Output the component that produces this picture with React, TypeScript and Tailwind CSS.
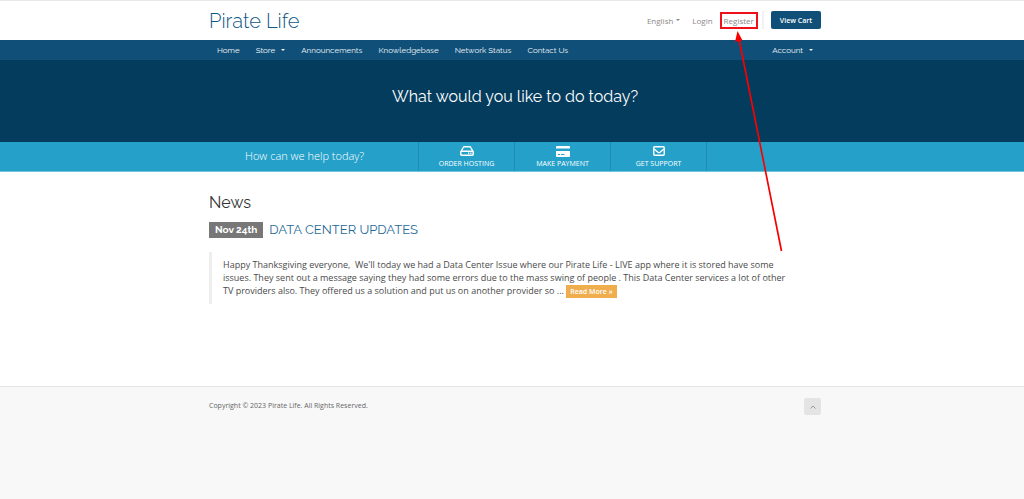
import React from 'react';

const heading = "font-['Raleway','Lato',sans-serif]";

const navLinks = ['Announcements', 'Knowledgebase', 'Network Status', 'Contact Us'];

const Container = ({ children }: { children: React.ReactNode }) => (
  <div className="pl-[6px]">
    <div className="max-w-[612px] mx-auto">{children}</div>
  </div>
);

const Caret = () => (
  <svg viewBox="0 0 4 2" className="w-1 h-[2px]" fill="currentColor" aria-hidden="true">
    <path d="M0 0h4L2 2z" />
  </svg>
);

const HostingIcon = () => (
  <svg viewBox="0 0 28 20" className="w-[14px] h-[10px]" fill="none" stroke="currentColor" strokeWidth="3" strokeLinejoin="round">
    <path d="M2 11L6.5 3Q7.200 1.600 8.800 1.600H19.200Q20.800 1.600 21.500 3L26 11" />
    <rect x="1.500" y="10.500" width="25" height="8" rx="2" />
    <path d="M16 14.500h2.400M20.500 14.500h2.400" />
  </svg>
);

const PaymentIcon = () => (
  <svg viewBox="0 0 28 22" className="w-[14px] h-[11px]" fill="currentColor">
    <path d="M2 0h24q2 0 2 2v3H0V2q0-2 2-2z" />
    <path fillRule="evenodd" d="M0 10h28v10q0 2-2 2H2q-2 0-2-2zM4 16v2h4v-2zM10 16v2h7v-2z" />
  </svg>
);

const SupportIcon = () => (
  <svg viewBox="0 0 24 20" className="w-3 h-[10px]" fill="none" stroke="currentColor" strokeWidth="2.800" strokeLinejoin="round">
    <rect x="1.500" y="1.500" width="21" height="17" rx="2" />
    <path d="M2 6l8 6.500q2 1.500 4 0L22 6" />
  </svg>
);

const shortcuts = [
  { label: 'ORDER HOSTING', icon: <HostingIcon /> },
  { label: 'MAKE PAYMENT', icon: <PaymentIcon /> },
  { label: 'GET SUPPORT', icon: <SupportIcon /> },
];

const App = () => {
  return (
    <div className="min-h-screen flex flex-col bg-[#f8f8f8] font-['Open_Sans',sans-serif] text-[#4a4a4a]">
      {/* Header */}
      <header className="bg-white border-t border-[#e8e8e8]">
        <Container>
          <div className="h-[39px] flex items-center justify-between">
            <a href="#" className={`${heading} text-xl font-light text-[#0f5686]`}>
              Pirate Life
            </a>
            <div className="flex items-center h-9 pb-px text-[8px] leading-[11px] text-[#888888]">
              <button type="button" className="flex items-center gap-[3px] mr-3">
                English <Caret />
              </button>
              <a href="#" className="mr-[7px]">Login</a>
              <a href="#" className="relative border-2 border-[#f0101a] px-[2px] py-px">
                Register
                {/* Pointer to the register link */}
                <svg className="absolute top-[17px] left-[12px] z-10 w-[50px] h-[222px] pointer-events-none" viewBox="0 0 50 222" aria-hidden="true">
                  <path d="M5 8L47.500 220" stroke="#f80000" strokeWidth="1.700" />
                  <path d="M3.500 0L8.500 9.500L1 11z" fill="#f80000" />
                </svg>
              </a>
              <span className="h-[18px] border-l-2 border-[#f2f2f2] ml-1 mr-[7px]" />
              <button type="button" className="bg-[#0f4f78] text-white text-[7px] font-semibold rounded-xs h-[18px] px-[9px]">
                View Cart
              </button>
            </div>
          </div>
        </Container>
      </header>

      {/* Navigation */}
      <nav className={`${heading} bg-[#0f4f78] text-[#f0f5f8] text-[8px] leading-3`}>
        <Container>
          <div className="px-2 h-5 flex items-center gap-4">
            <a href="#">Home</a>
            <button type="button" className="flex items-center gap-[6px]">
              Store <Caret />
            </button>
            {navLinks.map((link) => (
              <a key={link} href="#">{link}</a>
            ))}
            <button type="button" className="flex items-center gap-[6px] ml-auto">
              Account <Caret />
            </button>
          </div>
        </Container>
      </nav>

      {/* Banner */}
      <section className="bg-[#043c5e] pt-[25px] pb-[33px] text-center">
        <Container>
          <h1 className={`${heading} text-base text-white`}>What would you like to do today?</h1>
        </Container>
      </section>

      {/* Shortcuts */}
      <section className="bg-[#25a1c9] border-b border-[#70c3de] text-white">
        <Container>
          <div className="flex h-[29px]">
            <p className="w-[209px] pl-9 flex items-center text-[11px] font-light">How can we help today?</p>
            <div className="flex border-l border-[#1e8cb2]">
              {shortcuts.map(({ label, icon }) => (
                <a key={label} href="#" className="w-24 border-r border-[#1e8cb2] flex flex-col items-center text-[7px] leading-[9px] pt-1">
                  <span className="h-[13px] flex items-start">{icon}</span>
                  {label}
                </a>
              ))}
            </div>
          </div>
        </Container>
      </section>

      {/* News */}
      <main className="bg-white pt-[21px] pb-[82px]">
        <Container>
          <h2 className={`${heading} text-base leading-5 text-[#333333]`}>News</h2>
          <div className={`${heading} flex items-center gap-[6px] mt-[9px]`}>
            <span className="bg-[#777777] text-white text-[10px] leading-4 font-bold px-[6px]">Nov 24th</span>
            <a href="#" className="text-[13px] leading-4 text-[#1f6a98]">DATA CENTER UPDATES</a>
          </div>
          <blockquote className="mt-[14px] border-l-3 border-[#eeeeee] pl-[11px] pr-7 pt-[6px] pb-[6px] text-[9px] leading-[13px]">
            Happy Thanksgiving everyone,&nbsp; We'll today we had a Data Center Issue where our Pirate Life - LIVE app where it is stored have some issues. They sent out a message saying they had some errors due to the mass swing of people . This Data Center services a lot of other TV providers also. They offered us a solution and put us on another provider so ...{' '}
            <a href="#" className="bg-[#f0ad4e] text-white text-[7px] font-semibold px-1 py-[2px]">
              Read More »
            </a>
          </blockquote>
        </Container>
      </main>

      {/* Footer */}
      <footer className="border-t border-[#e4e4e4]">
        <Container>
          <div className="pt-[11px] flex items-center justify-between text-[7px] text-[#666666]">
            <p>Copyright © 2023 Pirate Life. All Rights Reserved.</p>
            <button type="button" aria-label="Back to top" className="size-[17px] rounded-xs bg-[#e4e4e4] text-[#999999] flex items-center justify-center">
              <svg viewBox="0 0 6 4" className="w-[6px] h-1" fill="none" stroke="currentColor">
                <path d="M.5 3.500L3 1l2.500 2.500" />
              </svg>
            </button>
          </div>
        </Container>
      </footer>
    </div>
  );
};

export default App;
